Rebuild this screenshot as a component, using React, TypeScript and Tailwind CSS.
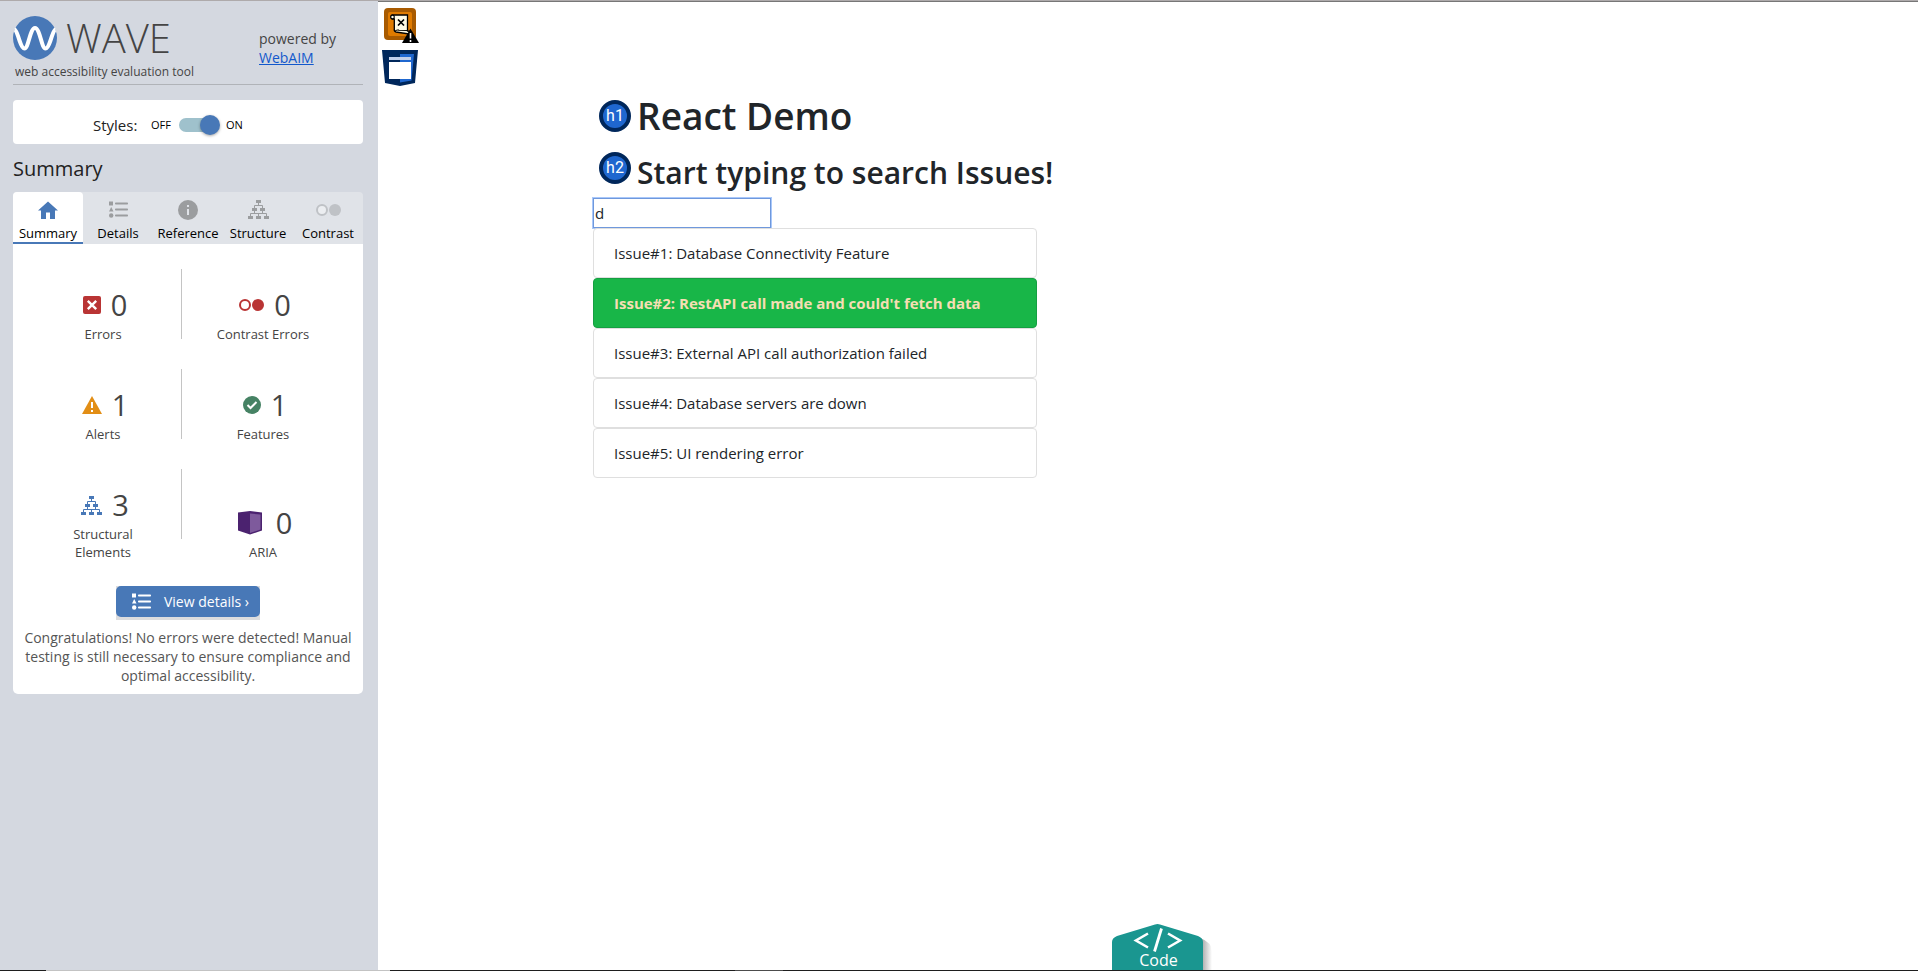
import { useState } from "react";
import type { ReactNode } from "react";

const SANS = "font-['Open_Sans','Noto_Sans',sans-serif]";

function Logo() {
  return (
    <svg viewBox="0 0 44 44" className="size-11 shrink-0" aria-hidden="true">
      <circle cx="22" cy="22" r="22" fill="#4878b7" />
      <path
        d="M1.5 13.5 C3.5 14 4.5 19 6.5 24.500 C8 29 9.500 32.500 11.500 32.500 C15.500 32.500 17 12 22 12 C27 12 28.500 32.500 32.500 32.500 C34.500 32.500 36 29 37.500 24.500 C39.500 19 40.500 14 42.500 13.500"
        fill="none"
        stroke="#fff"
        strokeWidth="4"
      />
    </svg>
  );
}

function HomeIcon() {
  return (
    <svg viewBox="0 0 20 18" className="h-[18px] w-5" fill="#4878b7" aria-hidden="true">
      <path d="M10 0.500 L20 9.500 H17 V18 H12 V11.500 H8 V18 H3 V9.500 H0 Z" />
    </svg>
  );
}

function ListIcon() {
  return (
    <svg viewBox="0 0 19 17" className="h-[17px] w-[19px]" fill="currentColor" aria-hidden="true">
      <rect x="0" y="0.500" width="4" height="4" />
      <path d="M2.200 6 L4.500 10.500 H0 Z" />
      <circle cx="2.200" cy="14.500" r="2.200" />
      <rect x="6" y="1.500" width="13" height="2" rx="0.800" />
      <rect x="6" y="7.500" width="13" height="2" rx="0.800" />
      <rect x="6" y="13.500" width="13" height="2" rx="0.800" />
    </svg>
  );
}

function InfoIcon() {
  return (
    <svg viewBox="0 0 20 20" className="size-5" aria-hidden="true">
      <circle cx="10" cy="10" r="10" fill="#9b9d9f" />
      <rect x="9" y="5" width="2" height="2" fill="#e0e3e8" />
      <rect x="9" y="9" width="2" height="6" fill="#e0e3e8" />
    </svg>
  );
}

function TreeIcon() {
  return (
    <svg viewBox="0 0 21 19" className="h-[19px] w-[21px]" fill="currentColor" aria-hidden="true">
      <rect x="8" y="0" width="5" height="3" />
      <rect x="4" y="8" width="5" height="3" />
      <rect x="12" y="8" width="5" height="3" />
      <rect x="0" y="16" width="5" height="3" />
      <rect x="8" y="16" width="5" height="3" />
      <rect x="16" y="16" width="5" height="3" />
      <path
        d="M10.500 3 V5.500 M6.500 8 V5.500 H14.500 V8 M6.500 11 V13.500 M14.500 11 V13.500 M2.500 16 V13.500 H18.500 V16 M10.500 13.500 V16"
        stroke="currentColor"
        fill="none"
      />
    </svg>
  );
}

function ContrastIcon() {
  return (
    <svg viewBox="0 0 25 12" className="h-3 w-[25px]" aria-hidden="true">
      <circle cx="6" cy="6" r="5" fill="#fff" fillOpacity="0.4" stroke="currentColor" strokeWidth="2" />
      <circle cx="19" cy="6" r="6" fill="currentColor" />
    </svg>
  );
}

function ErrorIcon() {
  return (
    <svg viewBox="0 0 18 18" className="size-[18px]" aria-hidden="true">
      <rect width="18" height="18" rx="2" fill="#b93434" />
      <path d="M4.800 4.800 L13.200 13.200 M13.200 4.800 L4.800 13.200" stroke="#fff" strokeWidth="2.400" />
    </svg>
  );
}

function AlertIcon() {
  return (
    <svg viewBox="0 0 20 18" className="h-[18px] w-5" aria-hidden="true">
      <path d="M10 0 L20 18 H0 Z" fill="#e28e15" />
      <rect x="9" y="6" width="2" height="6" fill="#fff" />
      <rect x="9" y="14" width="2" height="2" fill="#fff" />
    </svg>
  );
}

function FeatureIcon() {
  return (
    <svg viewBox="0 0 18 18" className="size-[18px]" aria-hidden="true">
      <circle cx="9" cy="9" r="9" fill="#468264" />
      <path d="M4.500 9 L7.500 12 L13.500 6" fill="none" stroke="#fff" strokeWidth="2" />
    </svg>
  );
}

function AriaIcon() {
  return (
    <svg viewBox="0 0 24 24" className="mr-1 size-6" aria-hidden="true">
      <path d="M0 1.500 L12 0 L24 1.500 V19.500 L12 23.500 L0 19.500 Z" fill="#4b226f" />
      <path d="M12 2.500 L22.500 3.500 V18.500 L12 22 Z" fill="#7e5a9c" />
    </svg>
  );
}

function ScriptAlertIcon() {
  return (
    <svg viewBox="0 0 35 36" className="h-9 w-[35px]" aria-label="Noscript element" role="img">
      <rect width="32" height="32" rx="4" fill="#a85a00" />
      <rect x="4" y="4" width="24" height="24" rx="2" fill="#e07b00" />
      <path d="M8 7 H23.500 V23 L26 23.500 L25 26 L12 24 Q9.800 23.500 10.300 21 V11 H8 Q6 9 8 7 Z" fill="#fffbe6" stroke="#000" strokeWidth="1.300" />
      <path d="M11 23.500 Q12 21.500 15 22.200 L24 22.500" fill="none" stroke="#000" strokeWidth="1.200" />
      <circle cx="8.500" cy="9" r="1.800" fill="#fffbe6" stroke="#000" strokeWidth="1.200" />
      <path d="M14 11.500 L20 17.500 M20 11.500 L14 17.500" stroke="#000" strokeWidth="1.700" />
      <path d="M26.500 20.500 L35 35 H18 Z" fill="#000" />
      <path d="M26.500 25 V30.500 M26.500 32 V34" stroke="#fff" strokeWidth="1.600" />
    </svg>
  );
}

function PageShieldIcon() {
  return (
    <svg viewBox="0 0 36 36" className="size-9" aria-label="Page region" role="img">
      <path d="M0 0 H36 L33 33 L18 36 L3 33 Z" fill="#00275b" />
      <path d="M18 4 H32 L29.500 30.500 L18 32.500 Z" fill="#1f67cf" />
      <rect x="7" y="12" width="22" height="17" fill="#fff" />
      <rect x="7" y="7" width="22" height="3" fill="#c2cfea" />
      <rect x="7" y="10" width="11" height="2" fill="#00275b" />
    </svg>
  );
}

function HeadingBadge({ label }: { label: string }) {
  return (
    <span className="flex size-8 shrink-0 items-center justify-center rounded-full border-4 border-[#00275b] bg-[#1f67cf] font-['Roboto',sans-serif] text-base leading-none font-normal text-white">
      {label}
    </span>
  );
}

function Tab({ label, icon, active = false }: { label: string; icon: ReactNode; active?: boolean }) {
  return (
    <button
      type="button"
      role="tab"
      aria-selected={active}
      className={
        active
          ? "flex flex-1 flex-col items-center rounded-t-[4px] border-b-2 border-[#4878b7] bg-white text-[13px] leading-[17px] text-black"
          : "flex flex-1 flex-col items-center border-b-2 border-transparent text-[13px] leading-[17px] text-black"
      }
    >
      <span className="flex h-[33px] items-center justify-center pt-0.5 text-[#9b9d9f]">{icon}</span>
      <span>{label}</span>
    </button>
  );
}

function Stat({ icon, count, label }: { icon: ReactNode; count: number; label: string }) {
  return (
    <div className="flex flex-col items-center justify-end pt-[18px] text-center text-[#444]">
      <div className="flex items-center gap-[10px] pl-1 text-[29px] leading-9">
        {icon}
        <span>{count}</span>
      </div>
      <div className="mt-0.5 max-w-20 min-w-min text-[13px] leading-[18px]">{label}</div>
    </div>
  );
}

function StatRow({ left, right }: { left: ReactNode; right: ReactNode }) {
  return (
    <div className="grid grid-cols-[100px_1fr_100px] pr-[50px] pl-10">
      {left}
      <div className="ml-7 h-[70px] w-px bg-[#c4c4c4]" />
      {right}
    </div>
  );
}

function Sidebar() {
  const [stylesOn, setStylesOn] = useState(true);
  return (
    <aside className={`w-[378px] shrink-0 bg-[#d4d8e0] pr-[15px] pl-[13px] ${SANS}`}>
      <header className="flex items-start justify-between border-b border-[#b0b3b8] pt-[15px] pb-[3px] text-[#444]">
        <div>
          <div className="flex items-center gap-[9px]">
            <Logo />
            <span className="text-[40px] leading-[44px] font-light">WAVE</span>
          </div>
          <div className="pt-[3px] pl-[2px] text-xs leading-[18px]">web accessibility evaluation tool</div>
        </div>
        <div className="w-[104px] pt-[13px] text-sm leading-[19px]">
          powered by
          <br />
          <a href="#webaim" className="text-[#1258cc] underline">
            WebAIM
          </a>
        </div>
      </header>

      <div className="mt-[15px] flex h-11 items-center rounded-[4px] bg-white pt-1.5 pl-20 text-black">
        <label htmlFor="styles" className="w-[58px] text-[15px] leading-5 text-[#222]">
          Styles:
        </label>
        <span className="w-7 text-[11px]">OFF</span>
        <input
          id="styles"
          type="checkbox"
          checked={stylesOn}
          onChange={(e) => setStylesOn(e.target.checked)}
          className="relative h-[14px] w-10 appearance-none rounded-full bg-[#9fc1cc] after:absolute after:-top-[3px] after:left-0 after:size-5 after:rounded-full after:bg-[#4878b7] after:shadow-[0_1px_3px_rgba(0,0,0,0.35)] checked:after:left-[21px]"
        />
        <span className="pl-[7px] text-[11px]">ON</span>
      </div>

      <h1 className="mt-[10px] mb-2 text-xl leading-[30px] text-[#222]">Summary</h1>

      <div role="tablist" className="flex h-[52px] rounded-t-[4px] bg-[#e0e3e8]">
        <Tab label="Summary" icon={<HomeIcon />} active />
        <Tab label="Details" icon={<ListIcon />} />
        <Tab label="Reference" icon={<InfoIcon />} />
        <Tab label="Structure" icon={<TreeIcon />} />
        <Tab
          label="Contrast"
          icon={
            <span className="text-[#bfc2c6]">
              <ContrastIcon />
            </span>
          }
        />
      </div>

      <section className="rounded-b-[5px] bg-white pt-[25px] pb-[9px]">
        <div className="flex flex-col gap-[26px]">
          <StatRow
            left={<Stat icon={<ErrorIcon />} count={0} label="Errors" />}
            right={
              <Stat
                icon={
                  <span className="text-[#b93434]">
                    <ContrastIcon />
                  </span>
                }
                count={0}
                label="Contrast&nbsp;Errors"
              />
            }
          />
          <StatRow
            left={<Stat icon={<AlertIcon />} count={1} label="Alerts" />}
            right={<Stat icon={<FeatureIcon />} count={1} label="Features" />}
          />
          <StatRow
            left={
              <Stat
                icon={
                  <span className="text-[#4878b7]">
                    <TreeIcon />
                  </span>
                }
                count={3}
                label="Structural Elements"
              />
            }
            right={<Stat icon={<AriaIcon />} count={0} label="ARIA" />}
          />
        </div>

        <div className="mt-[25px] flex justify-center">
          <div className="bg-[#dcdcde] pb-[3px]">
            <button
              type="button"
              className="flex h-[31px] items-center gap-[13px] rounded-[5px] bg-[#4878b7] pr-[11px] pl-4 text-sm text-white"
            >
              <ListIcon />
              View details ›
            </button>
          </div>
        </div>
        <p className="mt-2 px-2 text-center text-sm leading-[19px] text-[#555]">
          Congratulations! No errors were detected! Manual testing is still necessary to ensure compliance and optimal
          accessibility.
        </p>
      </section>
    </aside>
  );
}

const ISSUES = [
  "Issue#1: Database Connectivity Feature",
  "Issue#2: RestAPI call made and could't fetch data",
  "Issue#3: External API call authorization failed",
  "Issue#4: Database servers are down",
  "Issue#5: UI rendering error",
];

function CodeTab() {
  return (
    <button type="button" className="relative flex h-[46px] w-[91px] items-end justify-center text-white">
      <svg viewBox="0 0 100 46" className="absolute top-0 left-0 h-[46px] w-[100px]" aria-hidden="true">
        <defs>
          <linearGradient id="tab-shadow" x1="0" x2="1" y1="0" y2="0">
            <stop offset="0" stopColor="#9a9a9a" />
            <stop offset="1" stopColor="#fff" />
          </linearGradient>
        </defs>
        <path d="M88 14 Q100 18 100 28 V46 H88 Z" fill="url(#tab-shadow)" />
        <path d="M0 46 V18 Q0 14 5 12 L43 0.500 Q45.500 -0.300 48 0.500 L86 12 Q91 14 91 18 V46 Z" fill="#1a9690" />
        <path d="M36 9.500 L24 16.500 L36 23.500 M56 9.500 L68 16.500 L56 23.500" fill="none" stroke="#fff" strokeWidth="2.600" />
        <path d="M49.500 4.500 L42.500 27.500" stroke="#fff" strokeWidth="2.800" />
      </svg>
      <span className={`relative pl-0.5 text-base leading-5 ${SANS}`}>Code</span>
    </button>
  );
}

function DemoPage() {
  const [query, setQuery] = useState("d");
  return (
    <main className={`flex min-w-0 flex-1 flex-col border-t border-[#777] bg-white text-[#212529] ${SANS}`}>
      <div className="flex h-[90px] flex-col gap-[6px] pt-[6px] pl-1">
        <div className="pl-[2px]">
          <ScriptAlertIcon />
        </div>
        <PageShieldIcon />
      </div>

      <div className="mx-auto w-full max-w-[1140px] px-[15px]">
        <h1 className="flex items-start gap-[6px] pl-[6px] text-[37px] leading-[48px] font-semibold">
          <span className="pt-2">
            <HeadingBadge label="h1" />
          </span>
          React Demo
        </h1>
        <h2 className="mt-3 mb-1 flex items-start gap-[6px] pl-[6px] text-[30px] leading-[42px] font-semibold">
          <HeadingBadge label="h2" />
          Start typing to search Issues!
        </h2>
        <input
          type="text"
          aria-label="Search issues"
          value={query}
          onChange={(e) => setQuery(e.target.value)}
          className="block h-[30px] w-[178px] border border-[#6f98dc] px-px text-[15px] text-[#212529] shadow-[0_0_0_1px_#a9c8fa] outline-none"
        />
        <ul className="w-2/5">
          {ISSUES.map((issue, i) => (
            <li
              key={issue}
              className={
                i === 1
                  ? "rounded-[4px] border border-[#159f42] bg-[#18b648] px-5 py-3 text-[15px] leading-6 font-bold text-[#f5deb3]"
                  : "rounded-[4px] border border-[#dfdfdf] bg-white px-5 py-3 text-[15px] leading-6"
              }
            >
              {issue}
            </li>
          ))}
        </ul>
      </div>

      <div className="mt-auto flex justify-center pl-[19px]">
        <CodeTab />
      </div>
    </main>
  );
}

export default function App() {
  return (
    <div className="flex min-h-screen flex-col bg-white">
      <div className="h-px bg-[#aeaaab]" />
      <div className="flex flex-1">
        <Sidebar />
        <DemoPage />
      </div>
      <div className="flex h-px bg-[#1e1e1e]">
        <div className="w-[46px]" />
        <div className="w-[344px] bg-[#c3c3c3]" />
        <div className="w-[345px]" />
        <div className="w-12 bg-[#4c4c4c]" />
      </div>
    </div>
  );
}
